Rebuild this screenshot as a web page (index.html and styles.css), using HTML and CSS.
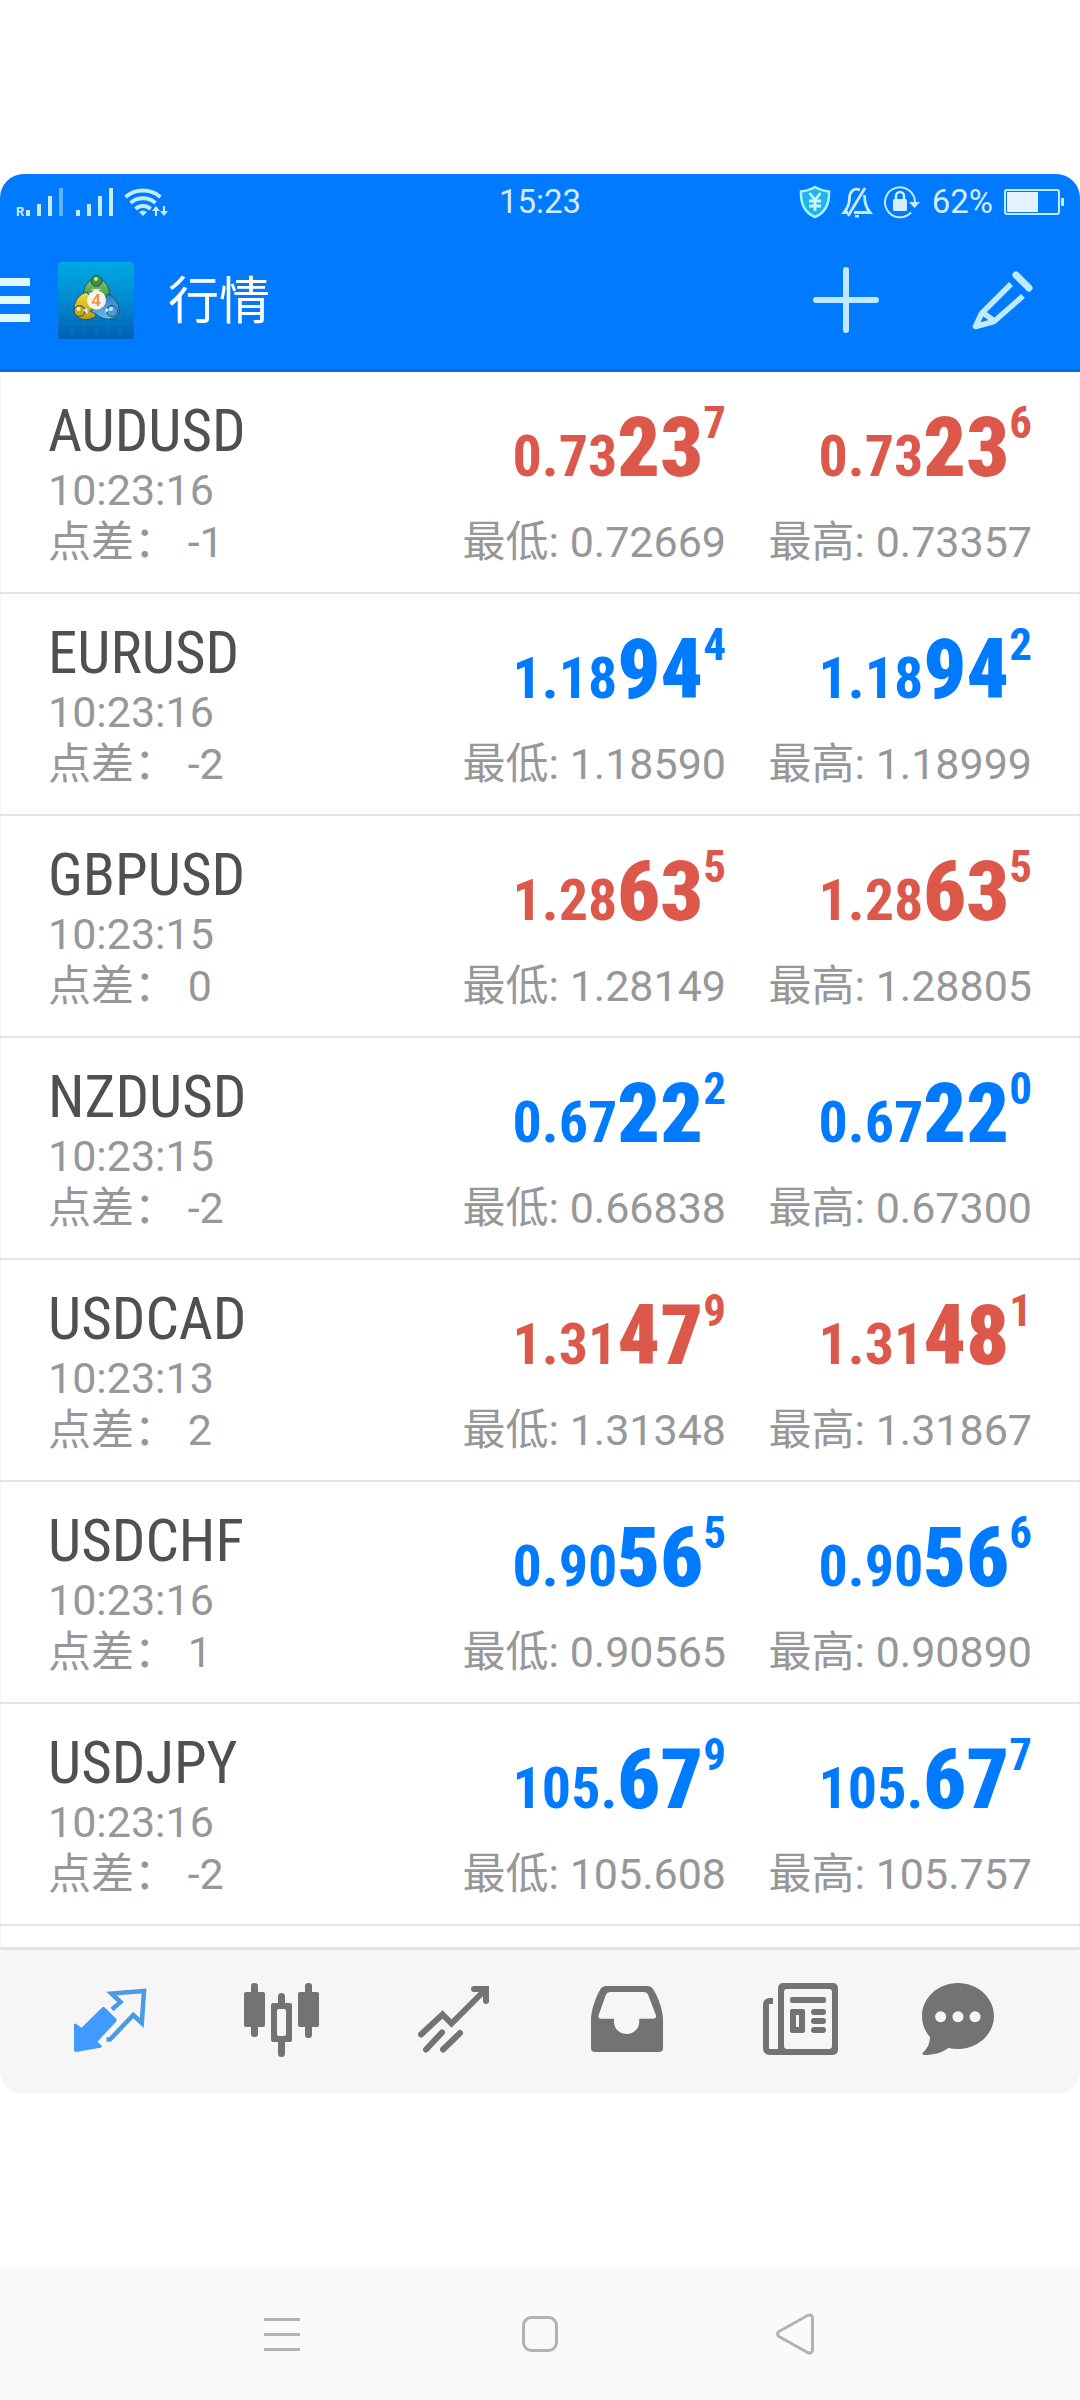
FILE: index.html
```html
<!DOCTYPE html>
<html lang="zh-CN">
<head>
<meta charset="utf-8">
<meta name="viewport" content="width=device-width, initial-scale=1">
<title>行情</title>
<link rel="stylesheet" href="styles.css">
</head>
<body>
<div class="app">
  <header class="top">
    <div class="status">
      <svg class="status-left" width="184" height="40" viewBox="0 0 184 40" aria-hidden="true">
        <g fill="#c4ebff">
          <text class="roaming" x="16" y="34">R</text>
          <path d="M26 28h4v6h-4zM37 22h4v12h-4zM48 14h4v20h-4z"/>
          <path d="M59 6h4v28h-4z" opacity=".5"/>
          <path d="M76 28h4v6h-4zM87 22h4v12h-4zM98 14h4v20h-4zM109 6h4v28h-4z"/>
          <path d="M139 30q4-3 8 0l-4 4z"/>
          <path d="M152 29l4-5 4 5h-3v5h-2v-5zM160 29h3v-5h2v5h3l-4 5z"/>
        </g>
        <g fill="none" stroke="#c4ebff" stroke-width="4">
          <path d="M125.500 15a27 27 0 0 1 35 0"/>
          <path d="M130.500 21a19 19 0 0 1 25 0"/>
          <path d="M135.500 27a11 11 0 0 1 15 0"/>
        </g>
      </svg>
      <time class="clock">15:23</time>
      <div class="status-right">
        <svg width="32" height="34" viewBox="0 0 32 34" aria-hidden="true">
          <path d="M16 2C12 4.500 7 6 2 6.500C1.500 19 5 27.500 16 32C27 27.500 30.500 19 30 6.500C25 6 20 4.500 16 2z" fill="#1eb4f0" stroke="#a8f4ff" stroke-width="2.500"/>
          <path d="M10.500 8l5.500 7 5.500-7M10 16h12M10 21h12M16 15v11" fill="none" stroke="#c8f6ff" stroke-width="2.800"/>
        </svg>
        <svg width="30" height="34" viewBox="0 0 30 34" aria-hidden="true">
          <g fill="none" stroke="#c4ebff" stroke-width="2.800">
            <path d="M18 5C11 2 7.500 8 7.500 13C7.500 20 5 24 2 27.500H6M12 27.500H28C24.500 23.500 22.500 19 22.500 10"/>
            <path d="M23 3L6 31"/>
          </g>
          <path d="M13 30h4v2.500h-4z" fill="#c4ebff"/>
        </svg>
        <svg width="38" height="34" viewBox="0 0 38 34" aria-hidden="true">
          <path d="M28 27.500A15 15 0 1 1 32 17" fill="none" stroke="#c4ebff" stroke-width="2"/>
          <path d="M26 17h11l-5.500 6z" fill="#c4ebff"/>
          <rect x="10" y="14" width="14" height="12" rx="1.500" fill="#d4edff"/>
          <path d="M13 15v-4a4 4 0 0 1 8 0v4" fill="none" stroke="#d4edff" stroke-width="2.500"/>
        </svg>
        <span class="charge">62%</span>
        <svg width="60" height="26" viewBox="0 0 60 26" aria-hidden="true">
          <rect x="1" y="1" width="54" height="24" rx="2" fill="none" stroke="#c4ebff" stroke-width="2"/>
          <path d="M3 3h31v20H3z" fill="#e6f1ff"/>
          <path d="M57 9h3v8h-3z" fill="#c4ebff"/>
        </svg>
      </div>
    </div>
    <div class="bar">
      <button class="icon-btn menu" type="button" aria-label="菜单">
        <svg width="30" height="44" viewBox="0 0 30 44"><path d="M0 0h30v8H0zM0 18h30v8H0zM0 36h30v8H0z" fill="#e0f9ff"/></svg>
      </button>
      <svg class="logo" width="76" height="76" viewBox="0 0 76 76" aria-hidden="true">
        <defs>
          <linearGradient id="tile" x1="0" y1="0" x2="0" y2="1"><stop offset="0" stop-color="#00a9e2"/><stop offset=".5" stop-color="#0089cf"/><stop offset="1" stop-color="#005fb4"/></linearGradient>
          <linearGradient id="green" x1="0" y1="0" x2="0" y2="1"><stop offset="0" stop-color="#8cc66a"/><stop offset="1" stop-color="#2d8a3c"/></linearGradient>
          <linearGradient id="gold" x1="0" y1="0" x2="0" y2="1"><stop offset="0" stop-color="#f3dc3c"/><stop offset="1" stop-color="#b99714"/></linearGradient>
          <linearGradient id="sky" x1="0" y1="0" x2="0" y2="1"><stop offset="0" stop-color="#2a7fc4"/><stop offset="1" stop-color="#6cb9e8"/></linearGradient>
        </defs>
        <rect width="76" height="77" rx="4" fill="url(#tile)"/>
        <path d="M14 0v76M26 0v76M38 0v76M50 0v76M62 0v76M0 14h76M0 26h76M0 38h76M0 50h76M0 62h76" stroke="#39b8e4" stroke-width="1" opacity=".15"/>
        <g stroke="#17546b" stroke-width="1">
          <path d="M25 39C24 25 30 17 38.500 16C47 17 53 25 52 39L43 42L34 42z" fill="url(#green)"/>
          <path d="M29 30C20 32 15 41 16 50C19 59 31 60 38 54L36 42z" fill="url(#gold)"/>
          <path d="M50 32C58 36 62 43 61 51C57 59 45 59 38 52L32 49L43 42z" fill="url(#sky)"/>
          <circle cx="38.500" cy="19" r="5.500" fill="#41903f"/>
          <circle cx="21.500" cy="49" r="5.500" fill="#c8a51d"/>
          <circle cx="54" cy="49" r="5.500" fill="#4b9edb"/>
        </g>
        <circle cx="38" cy="17" r="2" fill="#c4e8ae"/>
        <circle cx="20.500" cy="47" r="2" fill="#fbf0a0"/>
        <circle cx="53" cy="47" r="2" fill="#c5e9ff"/>
        <path d="M33 27l5 3 5-3zM29 46l-4 2 5 4zM48 46l3 2-4 3z" fill="#e6f3ee"/>
        <circle cx="38.500" cy="38" r="9.500" fill="#f8f4ec"/>
        <text class="logo-digit" x="38" y="44" text-anchor="middle">4</text>
      </svg>
      <h1 class="title">行情</h1>
      <button class="icon-btn" type="button" aria-label="添加">
        <svg width="72" height="72" viewBox="0 0 72 72"><path d="M36 6v60M6 36h60" stroke="#bfe9ff" stroke-width="6" stroke-linecap="round"/></svg>
      </button>
      <button class="icon-btn" type="button" aria-label="编辑">
        <svg width="72" height="72" viewBox="0 0 72 72">
          <g fill="none" stroke="#bfe9ff" stroke-width="5.500" stroke-linejoin="round">
            <path d="M45 20L15.500 49.500L9.500 62.500L28 57.500L57 32M16.500 48.500L28.500 57"/>
            <path d="M50 11L63 24" stroke-width="7" stroke-linecap="round"/>
          </g>
        </svg>
      </button>
    </div>
  </header>

  <main>
    <ul class="quotes">
      <li class="quote down">
        <div class="pair"><h2 class="symbol">AUDUSD</h2><p class="note">10:23:16</p><p class="note spread">点差： -1</p></div>
        <div class="side"><p class="price">0.73<b>23</b><sup>7</sup></p><p class="note range">最低: 0.72669</p></div>
        <div class="side"><p class="price">0.73<b>23</b><sup>6</sup></p><p class="note range">最高: 0.73357</p></div>
      </li>
      <li class="quote up">
        <div class="pair"><h2 class="symbol">EURUSD</h2><p class="note">10:23:16</p><p class="note spread">点差： -2</p></div>
        <div class="side"><p class="price">1.18<b>94</b><sup>4</sup></p><p class="note range">最低: 1.18590</p></div>
        <div class="side"><p class="price">1.18<b>94</b><sup>2</sup></p><p class="note range">最高: 1.18999</p></div>
      </li>
      <li class="quote down">
        <div class="pair"><h2 class="symbol">GBPUSD</h2><p class="note">10:23:15</p><p class="note spread">点差： 0</p></div>
        <div class="side"><p class="price">1.28<b>63</b><sup>5</sup></p><p class="note range">最低: 1.28149</p></div>
        <div class="side"><p class="price">1.28<b>63</b><sup>5</sup></p><p class="note range">最高: 1.28805</p></div>
      </li>
      <li class="quote up">
        <div class="pair"><h2 class="symbol">NZDUSD</h2><p class="note">10:23:15</p><p class="note spread">点差： -2</p></div>
        <div class="side"><p class="price">0.67<b>22</b><sup>2</sup></p><p class="note range">最低: 0.66838</p></div>
        <div class="side"><p class="price">0.67<b>22</b><sup>0</sup></p><p class="note range">最高: 0.67300</p></div>
      </li>
      <li class="quote down">
        <div class="pair"><h2 class="symbol">USDCAD</h2><p class="note">10:23:13</p><p class="note spread">点差： 2</p></div>
        <div class="side"><p class="price">1.31<b>47</b><sup>9</sup></p><p class="note range">最低: 1.31348</p></div>
        <div class="side"><p class="price">1.31<b>48</b><sup>1</sup></p><p class="note range">最高: 1.31867</p></div>
      </li>
      <li class="quote up">
        <div class="pair"><h2 class="symbol">USDCHF</h2><p class="note">10:23:16</p><p class="note spread">点差： 1</p></div>
        <div class="side"><p class="price">0.90<b>56</b><sup>5</sup></p><p class="note range">最低: 0.90565</p></div>
        <div class="side"><p class="price">0.90<b>56</b><sup>6</sup></p><p class="note range">最高: 0.90890</p></div>
      </li>
      <li class="quote up">
        <div class="pair"><h2 class="symbol">USDJPY</h2><p class="note">10:23:16</p><p class="note spread">点差： -2</p></div>
        <div class="side"><p class="price">105.<b>67</b><sup>9</sup></p><p class="note range">最低: 105.608</p></div>
        <div class="side"><p class="price">105.<b>67</b><sup>7</sup></p><p class="note range">最高: 105.757</p></div>
      </li>
    </ul>
  </main>

  <nav class="tabs" aria-label="主导航">
    <a class="tab active" href="#quotes" aria-label="行情" aria-current="page">
      <svg width="96" height="96" viewBox="0 0 96 96">
        <path d="M13.500 49.500L19.600 53.700L39.500 34Q41.300 32 43.500 34L54 44.500Q55.500 46 54 47.700L35.500 67.700L39.600 71.500V73.500L14 78Q12 78 12 76V50z" fill="#419bff"/>
        <path d="M50 35.500L58.500 28L49.500 19.500L82 17L79.800 49L71.300 41L48 65.500H44.500" fill="none" stroke="#4b9ae6" stroke-width="4.500"/>
      </svg>
    </a>
    <a class="tab" href="#charts" aria-label="图表">
      <svg width="96" height="96" viewBox="0 0 96 96" fill="currentColor">
        <rect x="17" y="9" width="7" height="54" rx="3"/><rect x="10" y="18" width="21" height="35" rx="2"/>
        <rect x="71" y="9" width="7" height="55" rx="3"/><rect x="64" y="18" width="21" height="35" rx="2"/>
        <path d="M44 29v-6.500a3.500 3.500 0 0 1 7 0V29h5a2 2 0 0 1 2 2v35a2 2 0 0 1-2 2h-5v11.500a3.500 3.500 0 0 1-7 0V68h-5a2 2 0 0 1-2-2V31a2 2 0 0 1 2-2zM45 35a2 2 0 0 0-2 2v23a2 2 0 0 0 2 2h5a2 2 0 0 0 2-2V37a2 2 0 0 0-2-2z" fill-rule="evenodd"/>
      </svg>
    </a>
    <a class="tab" href="#trade" aria-label="交易">
      <svg width="96" height="96" viewBox="0 0 96 96" fill="none" stroke="currentColor" stroke-width="6" stroke-linecap="round">
        <path d="M15 60.500L36.500 40.500L45.500 49.500L79 16M68 15H80V27M20 75.500L36 58.500M37 75.500L54 59"/>
      </svg>
    </a>
    <a class="tab" href="#history" aria-label="历史">
      <svg width="96" height="96" viewBox="0 0 96 96" fill="currentColor">
        <path d="M13 74V44C14 33 18 23 22.500 15Q24.500 12 28 12H69.500Q73 12 75 15C80 23 84 33 85 44V74Q85 78 81 78H17Q13 78 13 74zM32 18Q29 18 28 20.500L20.500 41.500Q20 44.700 23 44.700H36V48a12.600 12 0 0 0 25.200 0V44.700H75Q78.500 44.700 78 41.500L70 20.500Q69 18 66 18z" fill-rule="evenodd"/>
      </svg>
    </a>
    <a class="tab" href="#news" aria-label="新闻">
      <svg width="96" height="96" viewBox="0 0 96 96" fill="currentColor">
        <path d="M33 9H83a5 5 0 0 1 5 5V76a5 5 0 0 1-5 5H28V14a5 5 0 0 1 5-5zM37 15a3 3 0 0 0-3 3V72a3 3 0 0 0 3 3H79a3 3 0 0 0 3-3V18a3 3 0 0 0-3-3z" fill-rule="evenodd"/>
        <path d="M23 27H20Q16 27 16 31V74Q16 78 20 78H29" fill="none" stroke="currentColor" stroke-width="6"/>
        <rect x="40" y="23" width="36" height="6" rx="2"/>
        <path d="M42 35h11a2 2 0 0 1 2 2v20a2 2 0 0 1-2 2H42a2 2 0 0 1-2-2V37a2 2 0 0 1 2-2zM46 41v12h3V41z" fill-rule="evenodd"/>
        <rect x="61" y="35" width="15" height="6" rx="3"/><rect x="61" y="44" width="15" height="6" rx="3"/><rect x="61" y="53" width="15" height="6" rx="3"/>
      </svg>
    </a>
    <a class="tab" href="#messages" aria-label="消息">
      <svg width="96" height="96" viewBox="0 0 96 96" fill="currentColor">
        <path d="M36 9C56 9 72 24 72 42S56 75 36 75Q31 75 26.500 74C19 79 12 81 2 81Q-1 80 1.500 78Q8 72 8 63Q0 54 0 42C0 24 16 9 36 9zM18.600 37.200a5.500 5.500 0 1 0 .1 0zM35.900 37.200a5.500 5.500 0 1 0 .1 0zM53 37.200a5.500 5.500 0 1 0 .1 0z" fill-rule="evenodd"/>
      </svg>
    </a>
  </nav>
</div>

<div class="system">
  <button class="icon-btn" type="button" aria-label="最近任务">
    <svg width="44" height="44" viewBox="0 0 44 44" fill="none" stroke="#b3b3b3" stroke-width="3"><path d="M4 7.500h36M4 22.500h36M4 37.500h36"/></svg>
  </button>
  <button class="icon-btn" type="button" aria-label="主屏幕">
    <svg width="44" height="44" viewBox="0 0 44 44" fill="none" stroke="#b3b3b3" stroke-width="3"><rect x="5.500" y="5.500" width="33" height="33" rx="8"/></svg>
  </button>
  <button class="icon-btn" type="button" aria-label="返回">
    <svg width="44" height="44" viewBox="0 0 44 44" fill="none" stroke="#b3b3b3" stroke-width="3"><path d="M3 19.500L31.500 3.500Q36.500 1.500 36.500 6.500V37.500Q36.500 42.500 31.500 40.500L3 24.500Q0 22 3 19.500z"/></svg>
  </button>
</div>
</body>
</html>
```

FILE: styles.css
```css
* {
  box-sizing: border-box;
}

body {
  margin: 0;
  min-height: 100vh;
  display: flex;
  flex-direction: column;
  padding-top: 174px;
  background: #fff;
  font-family: Roboto, "Noto Sans CJK SC", sans-serif;
}

h1, h2, p, ul {
  margin: 0;
  padding: 0;
  font-weight: 400;
}

svg {
  display: block;
  overflow: visible;
}

.icon-btn {
  padding: 0;
  border: 0;
  background: none;
}

.app {
  overflow: hidden;
  border-radius: 24px;
  background: #fff;
  box-shadow: inset 0 0 0 1px #f4f4f4;
}

/* Header */
.top {
  background: #007aff;
  box-shadow: inset 0 -3px #0a6cd6;
}

.status {
  display: grid;
  grid-template-columns: 1fr auto 1fr;
  align-items: center;
  height: 54px;
  padding-top: 2px;
  color: #d4ecff;
  font-size: 33px;
  line-height: 40px;
}

.status-right {
  display: flex;
  align-items: center;
  justify-content: flex-end;
  gap: 11px;
  padding-right: 16px;
}

.roaming {
  font-size: 13px;
  font-weight: 700;
}

.bar {
  display: flex;
  align-items: center;
  height: 144px;
  padding-right: 42px;
}

.menu {
  margin-right: 28px;
}

.logo-digit {
  fill: #ef8f3c;
  font-size: 17px;
  font-weight: 500;
}

.title {
  flex: 1;
  margin-left: 34px;
  padding-top: 4px;
  color: #fff;
  font-size: 51px;
  line-height: 60px;
}

.bar .icon-btn + .icon-btn {
  margin-left: 84px;
}

/* Quote list */
.quotes {
  list-style: none;
  padding-bottom: 21px;
}

.quote {
  display: grid;
  grid-template-columns: 1fr 306px 306px;
  padding: 24px 48px 22px;
  border-bottom: 2px solid #e4e4e4;
}

.symbol {
  color: #505050;
  font-family: "Roboto Condensed", "Liberation Sans Narrow", Roboto, sans-serif;
  font-size: 59px;
  line-height: 70px;
}

.note {
  color: #97979a;
  font-size: 43px;
  line-height: 48px;
  white-space: nowrap;
}

.spread,
.range {
  line-height: 56px;
}

.side {
  text-align: right;
}

.price {
  font-family: "Roboto Condensed", "Liberation Sans Narrow", Roboto, sans-serif;
  font-size: 58px;
  font-weight: 700;
  line-height: 120px;
  height: 118px;
  white-space: nowrap;
}

.price b {
  font-size: 84px;
  line-height: 0;
}

.price sup {
  font-size: 45px;
  line-height: 0;
  vertical-align: 38px;
}

.up .price {
  color: #007aff;
}

.down .price {
  color: #db584b;
}

/* Bottom tabs */
.tabs {
  display: grid;
  grid-template-columns: repeat(6, 1fr);
  padding: 24px;
  border-top: 3px solid #e4e4e4;
  background: #f6f6f6;
}

.tab {
  display: flex;
  justify-content: center;
  color: #737373;
}

/* System navigation */
.system {
  display: grid;
  grid-template-columns: repeat(3, 258px);
  justify-content: center;
  justify-items: center;
  align-items: center;
  height: 132px;
  margin-top: auto;
  background: #fafafa;
}
```
